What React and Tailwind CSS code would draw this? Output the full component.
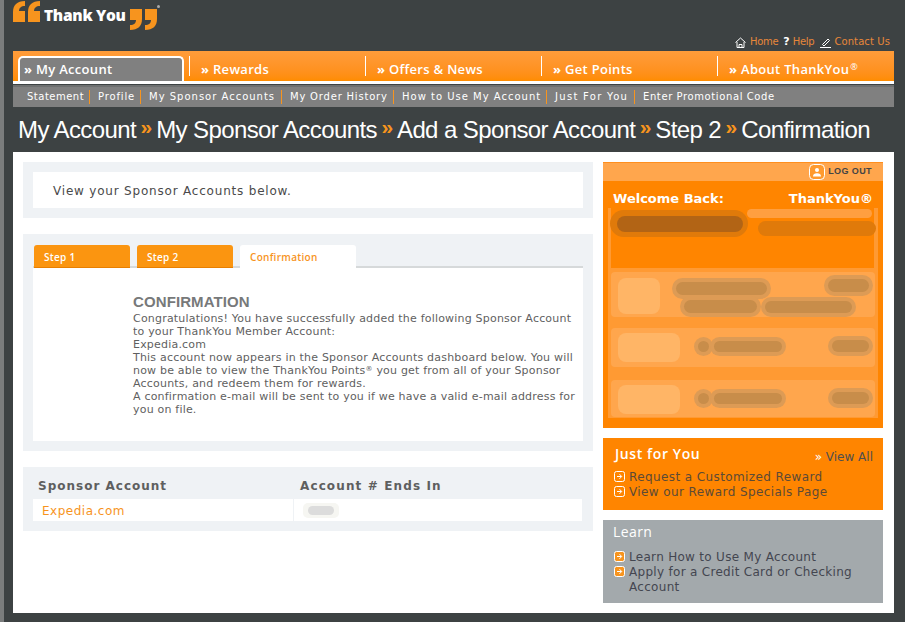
import React from 'react';

const verdana = "font-['DejaVu_Sans',sans-serif]";

const mainNav = ['Rewards', 'Offers & News', 'Get Points'];
const subNav = [
  { label: 'Statement', cls: 'w-[69px] pl-[6px] border-r tracking-[0.5px]' },
  { label: 'Profile', cls: 'w-[51px] pl-[8px] border-r' },
  { label: 'My Sponsor Accounts', cls: 'w-[141px] pl-[8px] border-r tracking-[1px]' },
  { label: 'My Order History', cls: 'w-[112px] pl-[8px] border-r tracking-[0.8px]' },
  { label: 'How to Use My Account', cls: 'w-[153px] pl-[8px] border-r tracking-[1px]' },
  { label: 'Just For You', cls: 'w-[88px] pl-[8px] border-r tracking-[1.3px]' },
  { label: 'Enter Promotional Code', cls: 'pl-[8px] tracking-[0.6px]' },
];
const crumbs = ['My Account', 'My Sponsor Accounts', 'Add a Sponsor Account', 'Step 2', 'Confirmation'];

const Quote = ({ flip }) => (
  <svg width="28" height="21" viewBox="0 0 28 21" className={flip ? 'rotate-180' : ''}>
    <path fill="#f7941e" d="M0 21V11C0 4 4 0 12 0v5C8 5 6 7 6 10h6v11zM15 21V11c0-7 4-11 12-11v5c-4 0-6 2-6 5h6v11z" />
  </svg>
);

const ArrowBox = ({ fill }) => (
  <svg width="11" height="11" viewBox="0 0 11 11" className="shrink-0 mt-[1px]">
    <rect x="0.5" y="0.5" width="10" height="10" rx="2" fill={fill} stroke="#fff" />
    <path d="M3 5.5h4.5M5.5 3.2l2.2 2.3-2.2 2.3" fill="none" stroke="#fff" strokeWidth="1" />
  </svg>
);

const Blob = ({ className }) => <div className={`absolute rounded-full blur-[0.6px] ${className}`} />;
const Smudge = ({ className }) => <Blob className={`bg-[#c88d4a] shadow-[0_0_0_4px_#dd9b55] ${className}`} />;

const App = () => {
  return (
    <div className={`h-[622px] w-[905px] overflow-hidden bg-[#3d4243] border-l-4 border-[#7b7d7d] pl-[9px] pr-[11px] ${verdana}`}>
      {/* header */}
      <header className="relative h-[51px]">
        <div className="flex items-start pt-[1px]">
          <Quote />
          <span className="font-['Open_Sans',sans-serif] font-extrabold text-[15.5px] leading-none text-white ml-[3px] mt-[7px] tracking-[-0.3px] whitespace-nowrap">Thank You</span>
          <div className="mt-[8px] ml-[3px]"><Quote flip /></div>
          <div className="w-[3px] h-[3px] rounded-full bg-[#aaa] mt-[4px]" />
        </div>
        <div className="absolute right-[4px] top-[36px] flex items-center text-[10px] leading-[12px] tracking-[0.1px] text-[#e8873a]">
          <svg width="11" height="11" viewBox="0 0 11 11" className="mr-[4px]">
            <path d="M0.5 5.5 5.5 1l5 4.5M2 5v5.5h7V5M4 10.5V7.5h3v3" fill="none" stroke="#fff" strokeWidth="1" />
          </svg>
          <span className="tracking-[-0.3px]">Home</span>
          <span className="text-white font-bold ml-[5px] mr-[3px] text-[11px]">?</span>
          <span className="tracking-[-0.3px]">Help</span>
          <svg width="11" height="11" viewBox="0 0 11 11" className="ml-[6px] mr-[3px]">
            <path d="M2.5 7.5 8 2l1.5 1.5L4 9zM0 10.5h11" fill="none" stroke="#fff" strokeWidth="1" />
          </svg>
          <span>Contact Us</span>
        </div>
      </header>

      {/* main nav */}
      <nav className="flex h-[30px] bg-gradient-to-b from-[#ff9c3a] to-[#ff8c00] pl-[5px] font-['Open_Sans',sans-serif] font-semibold text-[13px] text-white">
        <div className="w-[166px] mt-[5px] h-[25px] border-2 border-b-0 border-white rounded-t-[5px] bg-[#808080] pl-[4px] leading-[22px] whitespace-nowrap tracking-[0.3px]">
          <span className="font-bold">»</span> My Account
        </div>
        <div className="w-[5px]" />
        {mainNav.map((item) => (
          <div key={item} className="w-[176px] mt-[5px] h-[20px] border-l border-white pl-[11px] leading-[26px] whitespace-nowrap tracking-[0.3px]">
            <span className="font-bold">»</span> {item}
          </div>
        ))}
        <div className="w-[176px] mt-[5px] h-[20px] border-l border-white pl-[11px] leading-[26px] whitespace-nowrap tracking-[0.3px]">
          <span className="font-bold">»</span> About ThankYou<sup className="text-[9px] font-normal ml-[1px]">®</sup>
        </div>
      </nav>
      <div className="h-[3px] bg-white" />

      {/* sub nav */}
      <div className="mt-[1px] h-[22px] border-t-[2px] border-[#6f7171] bg-[#808080] pl-[8px] flex items-center text-[10px] tracking-[0.85px] text-white">
        {subNav.map((item) => (
          <span key={item.label} className={`h-[14px] leading-[14px] whitespace-nowrap border-[#f7941e] ${item.cls}`}>{item.label}</span>
        ))}
      </div>

      {/* breadcrumb */}
      <h1 className="h-[45px] pl-[5px] pt-[9px] flex items-start font-['Liberation_Sans',sans-serif] text-[24px] leading-[28px] tracking-[-0.6px] text-white whitespace-nowrap">
        {crumbs.map((c, i) => (
          <React.Fragment key={c}>
            {i > 0 && <span className="text-[#f7941e] font-bold text-[21px] mx-[4.5px] -mt-[3px]">»</span>}
            <span>{c}</span>
          </React.Fragment>
        ))}
      </h1>

      {/* content */}
      <main className="h-[461px] bg-white pt-[10px] pl-[10px] flex">
        <div className="w-[570px] flex flex-col">
          <section className="h-[56px] bg-[#eff2f5] pl-[10px] pr-[10px] py-[10px]">
            <div className="h-[36px] bg-white pl-[20px] text-[12px] leading-[38px] tracking-[0.8px] text-[#4a4a4a]">View your Sponsor Accounts below.</div>
          </section>

          <section className="mt-[16px] h-[217px] bg-[#eff2f5] pl-[10px] pr-[10px] pt-[11px]">
            <div className="flex h-[23px] items-end border-b-[2px] border-[#d6d9da] font-['Open_Sans',sans-serif] text-[10px] font-semibold tracking-[0.3px]">
              <div className="ml-[1px] w-[96px] h-[23px] -mb-[2px] bg-[#fb9510] border-b border-[#e87f00] rounded-t-[3px] text-white pl-[10px] leading-[24px]">Step 1</div>
              <div className="ml-[7px] w-[96px] h-[23px] -mb-[2px] bg-[#fb9510] border-b border-[#e87f00] rounded-t-[3px] text-white pl-[10px] leading-[24px]">Step 2</div>
              <div className="ml-[7px] w-[116px] h-[23px] -mb-[2px] bg-white rounded-t-[3px] text-[#f7941e] pl-[10px] leading-[24px]">Confirmation</div>
            </div>
            <div className="h-[173px] bg-white pl-[100px] pt-[26px] text-[#5f5f5f]">
              <h2 className="font-['Liberation_Sans',sans-serif] font-bold text-[15px] leading-[15px] tracking-[0.1px] text-[#77797a]">CONFIRMATION</h2>
              <p className="w-[447px] mt-[3px] text-[11px] leading-[13px] tracking-[0.2px]">
                Congratulations! You have successfully added the following Sponsor Account to your ThankYou Member Account:<br />
                Expedia.com<br />
                This account now appears in the Sponsor Accounts dashboard below. You will now be able to view the ThankYou Points<span className="relative -top-[3px] text-[7px] leading-none">®</span> you get from all of your Sponsor Accounts, and redeem them for rewards.<br />
                A confirmation e-mail will be sent to you if we have a valid e-mail address for you on file.
              </p>
            </div>
          </section>

          <section className="mt-[16px] h-[64px] bg-[#eff2f5] pl-[10px] pr-[11px]">
            <div className="h-[32px] pt-[5px] flex items-center text-[12px] font-bold tracking-[1px] text-[#5e5f5f]">
              <div className="w-[267px] pl-[5px]">Sponsor Account</div>
              <div className="tracking-[1.12px]">Account # Ends In</div>
            </div>
            <div className="h-[22px] bg-white flex items-center text-[12px]">
              <div className="w-[261px] h-full border-r border-[#eff2f5] pl-[9px] leading-[24px] tracking-[0.5px] text-[#f7941e]">Expedia.com</div>
              <div className="ml-[9px] w-[36px] h-[15px] rounded-[5px] bg-[#f6f6f2] flex items-center justify-center">
                <div className="w-[26px] h-[9px] rounded-full bg-[#dcdcdc]" />
              </div>
            </div>
          </section>
        </div>

        <aside className="ml-[10px] w-[280px] flex flex-col">
          <div className="h-[266px] bg-[#ff8500] flex flex-col">
            <div className="h-[19px] bg-[#ffa64d] border-t border-[#ff8f1f] flex items-center justify-end pr-[11px] font-['Liberation_Sans',sans-serif] font-bold text-[9px] tracking-[0.4px] text-[#444]">
              <svg width="16" height="16" viewBox="0 0 16 16" className="mr-[3px]">
                <rect x="0.5" y="0.5" width="15" height="15" rx="4" fill="#ff9a2e" stroke="#fff" />
                <circle cx="8" cy="6" r="2" fill="#fff" />
                <path d="M4 12.5c0-2.5 1.5-3.3 4-3.3s4 .8 4 3.3z" fill="#fff" />
              </svg>
              LOG OUT
            </div>
            <div className="h-[27px] flex items-end justify-between pl-[10px] pr-[10px] text-[13px] font-bold leading-[19px] text-white">
              <span>Welcome Back:</span>
              <span>ThankYou®</span>
            </div>
            {/* account summary is smudged out in the screenshot */}
            <div className="mx-[5px] h-[210px] bg-[#ff9a33] overflow-hidden flex flex-col">
              <div className="relative h-[60px] bg-[#ff8500] ml-[3px] mr-[4px] mb-[4px]">
                <Blob className="left-[-1px] top-[2px] w-[138px] h-[27px] bg-[#e07a0a]" />
                <Blob className="left-[6px] top-[8px] w-[126px] h-[16px] bg-[#b26415]" />
                <Blob className="left-[147px] top-[13px] w-[118px] h-[15px] bg-[#e07a0a]" />
                <Blob className="left-[136px] top-[1px] w-[125px] h-[9px] bg-[#ff9f40]" />
              </div>
              <div className="relative h-[45px] mx-[3px] mb-[11px] bg-[#ffa64d] rounded-[4px]">
                <Blob className="left-[7px] top-[6px] w-[42px] h-[36px] !rounded-[8px] bg-[#ffb566]" />
                <Smudge className="left-[65px] top-[10px] w-[91px] h-[13px]" />
                <Smudge className="left-[73px] top-[28px] w-[73px] h-[13px]" />
                <Smudge className="left-[154px] top-[29px] w-[87px] h-[12px]" />
                <Smudge className="right-[6px] top-[7px] w-[41px] h-[13px]" />
              </div>
              {[0, 1].map((i) => (
                <div key={i} className={`relative mx-[3px] bg-[#ffa64d] rounded-[4px] ${i === 0 ? 'h-[39px] mb-[13px]' : 'h-[37px]'}`}>
                  <Blob className="left-[7px] top-[5px] w-[62px] h-[29px] !rounded-[8px] bg-[#ffb566]" />
                  <Smudge className="left-[87px] top-[13px] w-[11px] h-[11px]" />
                  <Smudge className="left-[103px] top-[13px] w-[68px] h-[11px]" />
                  <Smudge className="right-[6px] top-[12px] w-[37px] h-[12px]" />
                </div>
              ))}
            </div>
          </div>

          <div className="mt-[10px] h-[72px] bg-[#ff8500] pl-[11px] pt-[6px] relative">
            <h3 className="ml-[1px] font-['Open_Sans',sans-serif] font-semibold text-[14px] leading-[20px] tracking-[0.6px] text-white">Just for You</h3>
            <span className="absolute right-[10px] top-[10px] text-[12px] text-[#4f4f4f]"><span className="text-white">»</span> View All</span>
            <ul className="mt-[6px] text-[12px] leading-[15px] tracking-[0.4px] text-[#5c4a36]">
              <li className="flex gap-[4px] whitespace-nowrap"><ArrowBox fill="#ff8500" />Request a Customized Reward</li>
              <li className="flex gap-[4px] whitespace-nowrap"><ArrowBox fill="#ff8500" />View our Reward Specials Page</li>
            </ul>
          </div>

          <div className="mt-[10px] h-[83px] bg-[#a3a9ac] pl-[10px] pt-[2px]">
            <h3 className="font-['Open_Sans',sans-serif] text-[14px] leading-[20px] tracking-[0.4px] text-white">Learn</h3>
            <ul className="ml-[1px] mt-[8px] text-[12px] leading-[15px] tracking-[0.3px] text-[#434650]">
              <li className="flex gap-[4px]"><ArrowBox fill="#f7941e" />Learn How to Use My Account</li>
              <li className="flex gap-[4px]"><ArrowBox fill="#f7941e" /><span className="w-[240px]">Apply for a Credit Card or Checking Account</span></li>
            </ul>
          </div>
        </aside>
      </main>
    </div>
  );
};

export default App;
